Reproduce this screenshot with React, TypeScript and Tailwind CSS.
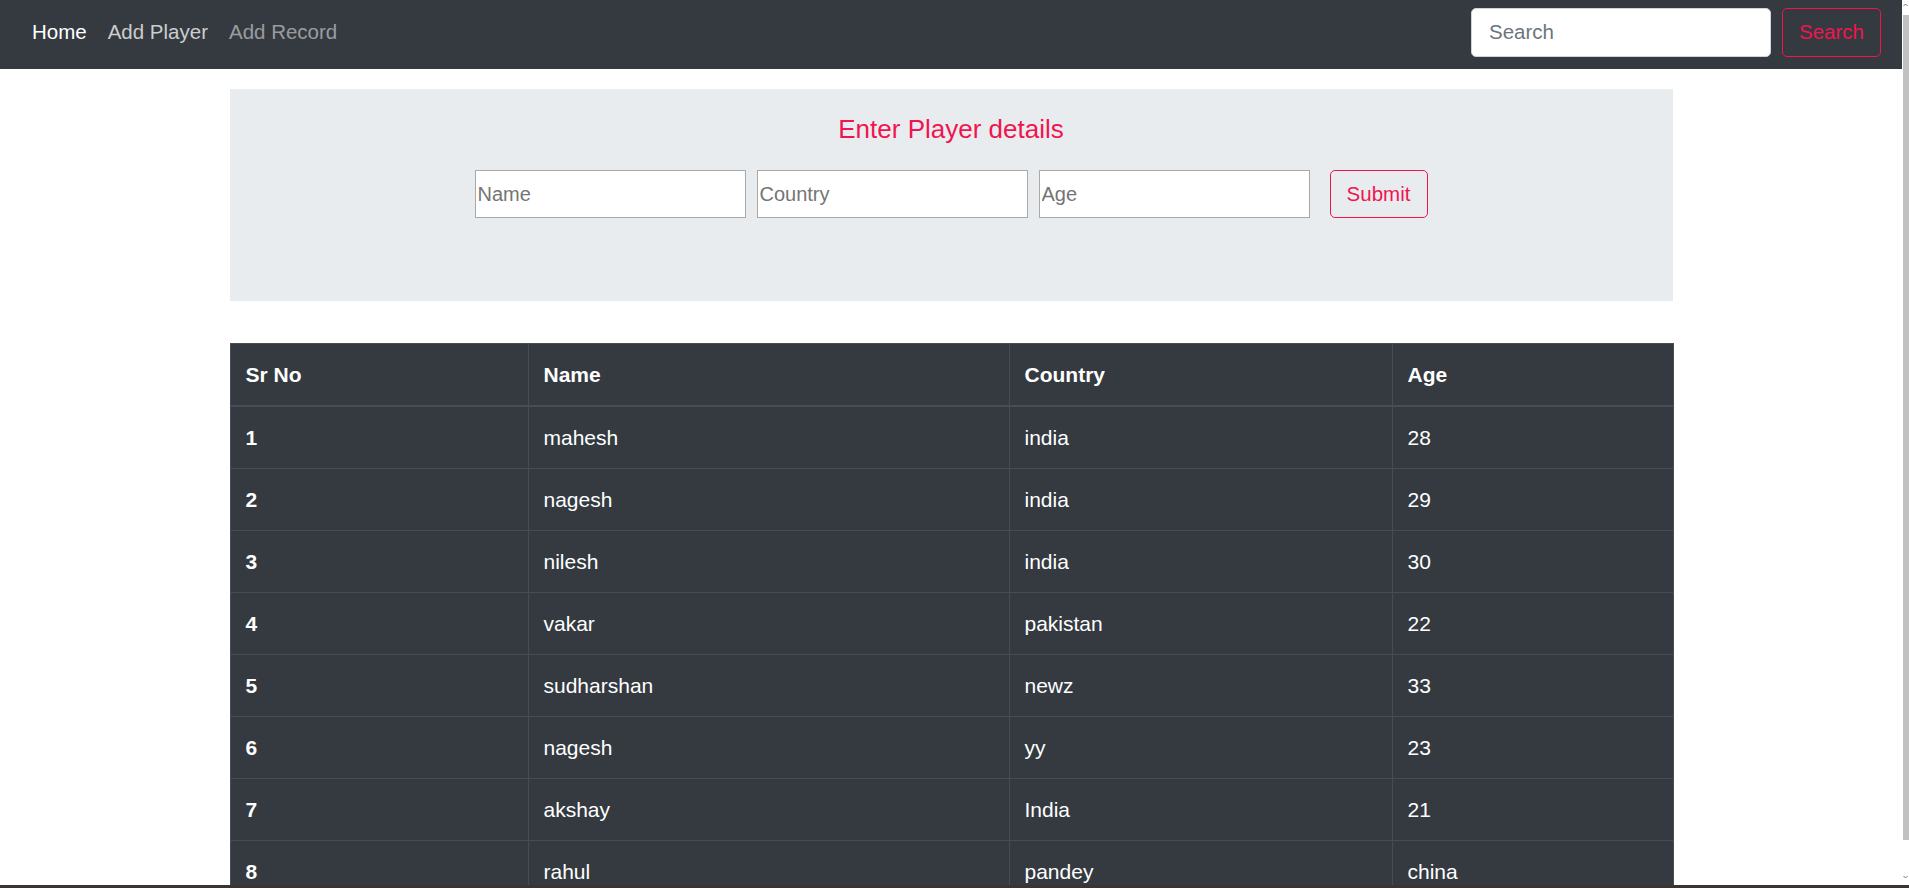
import React from "react";

const players = [
  { no: 1, name: "mahesh", country: "india", age: "28" },
  { no: 2, name: "nagesh", country: "india", age: "29" },
  { no: 3, name: "nilesh", country: "india", age: "30" },
  { no: 4, name: "vakar", country: "pakistan", age: "22" },
  { no: 5, name: "sudharshan", country: "newz", age: "33" },
  { no: 6, name: "nagesh", country: "yy", age: "23" },
  { no: 7, name: "akshay", country: "India", age: "21" },
  { no: 8, name: "rahul", country: "pandey", age: "china" },
];

function Navbar() {
  return (
    <nav className="h-[69px] shrink-0 bg-[#343a40] flex items-center justify-between pl-[32px] pr-[21px] pb-[5px]">
      <div className="flex items-center gap-[21px] text-[20.5px] leading-[30px]">
        <a className="text-white">Home</a>
        <a className="text-[rgba(255,255,255,0.75)]">Add Player</a>
        <a className="text-[rgba(255,255,255,0.5)]">Add Record</a>
      </div>
      <form className="flex items-center gap-[11px]">
        <input
          type="search"
          placeholder="Search"
          className="w-[300px] h-[49px] rounded-[5px] bg-white border border-[#ced4da] pl-[17px] text-[20.5px] text-[#495057] placeholder:text-[#6c757d] outline-none"
        />
        <button
          type="button"
          className="w-[99px] h-[49px] rounded-[5px] border border-[#f0144f] text-[#f0144f] text-[20.5px]"
        >
          Search
        </button>
      </form>
    </nav>
  );
}

function PlayerForm() {
  return (
    <div className="bg-[#e9ecef] pt-[25px] pb-[83px]">
      <h2 className="text-center text-[26px] leading-[31px] text-[#f0144f]">Enter Player details</h2>
      <div className="flex justify-center items-center mt-[25px]">
        <div className="flex gap-[11px]">
          {["Name", "Country", "Age"].map((p) => (
            <input
              key={p}
              type="text"
              placeholder={p}
              className="w-[271px] h-[48px] bg-white border border-[#a9a9a9] pl-[2px] text-[20px] placeholder:text-[#757575] outline-none"
            />
          ))}
        </div>
        <button
          type="button"
          className="ml-[20px] w-[98px] h-[48px] rounded-[5px] border border-[#f0144f] text-[#f0144f] text-[20.5px]"
        >
          Submit
        </button>
      </div>
    </div>
  );
}

function PlayerTable() {
  return (
    <table className="w-full table-fixed border-collapse bg-[#343a40] text-white text-[21px] mt-[42px]">
      <colgroup>
        <col className="w-[298px]" />
        <col className="w-[481px]" />
        <col className="w-[383px]" />
        <col className="w-[281px]" />
      </colgroup>
      <thead>
        <tr>
          {["Sr No", "Name", "Country", "Age"].map((h) => (
            <th
              key={h}
              className="text-left font-bold px-[15px] py-[15px] leading-[31px] border border-[#454d55] border-b-2"
            >
              {h}
            </th>
          ))}
        </tr>
      </thead>
      <tbody>
        {players.map((p) => (
          <tr key={p.no}>
            <th className="text-left font-bold px-[15px] py-[15px] leading-[31px] border border-[#454d55]">{p.no}</th>
            <td className="px-[15px] py-[15px] leading-[31px] border border-[#454d55]">{p.name}</td>
            <td className="px-[15px] py-[15px] leading-[31px] border border-[#454d55]">{p.country}</td>
            <td className="px-[15px] py-[15px] leading-[31px] border border-[#454d55]">{p.age}</td>
          </tr>
        ))}
      </tbody>
    </table>
  );
}

function Scrollbar() {
  return (
    <div className="w-[7px] shrink-0 bg-white flex flex-col items-center">
      <svg width="7" height="12" viewBox="0 0 7 12" className="shrink-0">
        <path d="M1.5 6 L3.5 4 L5.5 6" stroke="#777" strokeWidth="1" fill="none" />
      </svg>
      <div className="w-[6px] h-[825px] bg-[#c1c1c1] mt-[3px]" />
      <div className="flex-1" />
      <svg width="7" height="12" viewBox="0 0 7 12" className="shrink-0 mb-[2px]">
        <path d="M1.5 5 L3.5 7 L5.5 5" stroke="#777" strokeWidth="1" fill="none" />
      </svg>
    </div>
  );
}

export default function App() {
  return (
    <div className="w-[1909px] h-[888px] overflow-hidden flex flex-col bg-white font-['Liberation_Sans',Arial,sans-serif]">
      <div className="flex flex-1 min-h-0">
        <div className="flex-1 min-w-0 flex flex-col overflow-hidden">
          <Navbar />
          <main className="w-[1443px] mx-auto mt-[20px]">
            <PlayerForm />
            <PlayerTable />
          </main>
        </div>
        <Scrollbar />
      </div>
      <div className="h-[3px] shrink-0 bg-[#3a3532]" />
    </div>
  );
}
